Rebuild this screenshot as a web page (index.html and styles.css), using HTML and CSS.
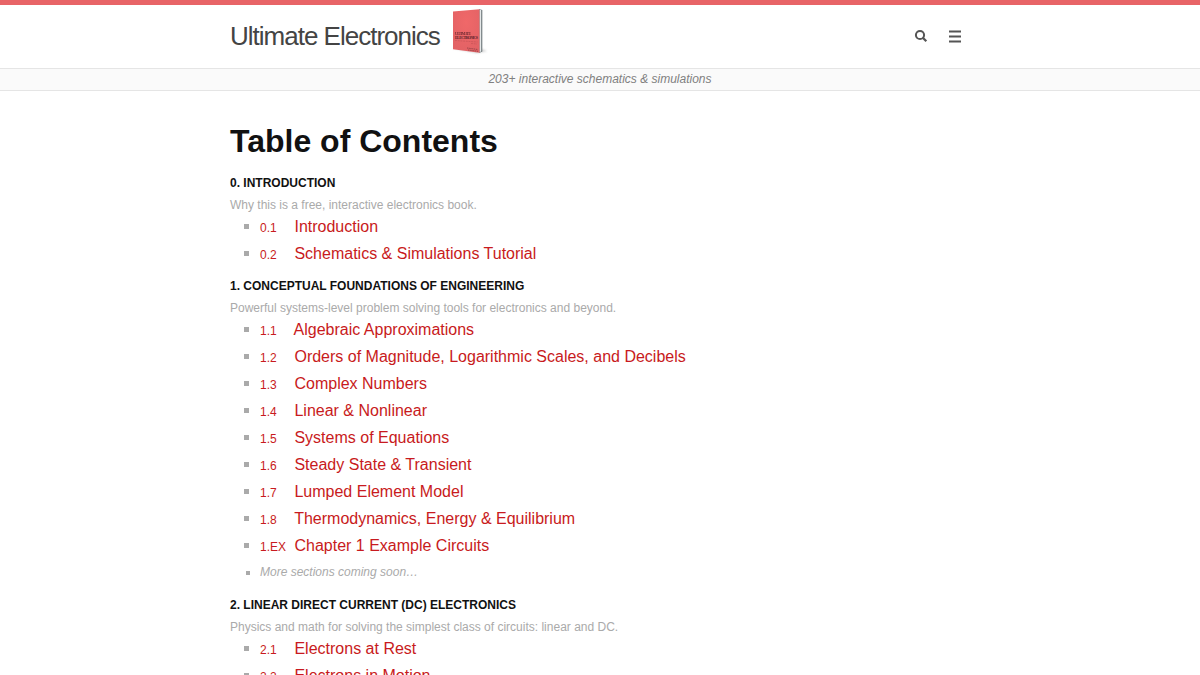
FILE: index.html
```html
<!DOCTYPE html>
<html lang="en">
<head>
<meta charset="utf-8">
<title>Ultimate Electronics</title>
<link rel="stylesheet" href="styles.css">
</head>
<body>
<header class="site-header">
  <div class="header-inner">
    <a class="brand">
      <span class="brand-name">Ultimate Electronics</span>
      <svg class="book" width="40" height="50" viewBox="0 0 40 50">
        <defs>
          <radialGradient id="cover" cx=".5" cy=".3" r=".7"><stop offset="0" stop-color="#f06869"/><stop offset="1" stop-color="#e26265"/></radialGradient>
          <filter id="soft" x="-30%" y="-100%" width="160%" height="300%"><feGaussianBlur stdDeviation=".8"/></filter>
        </defs>
        <path d="M2 43L27 48L37 46L31 44Z" fill="#777" opacity=".4" filter="url(#soft)"/>
        <path d="M29 4L32.300 5V46.600L29 48Z" fill="#697477"/>
        <path d="M29.500 4.600L31.200 5V46.200L29.500 47.500Z" fill="#e5e8e8"/>
        <path d="M3 6.600L29.500 4.200V47.800L3 44.200Z" fill="url(#cover)"/>
        <g font-family="Liberation Serif, serif" font-weight="bold" fill="#5a2028">
          <text x="5" y="29.900" font-size="3.700" textLength="16" opacity=".85">ULTIMATE</text>
          <text x="5" y="33.600" font-size="3.900" textLength="23">ELECTRONICS</text>
        </g>
        <path d="M5 35.500L27.500 37M21 38.500L27 39" stroke="#b94c51" stroke-width=".5" stroke-dasharray="2 .7"/>
        <path d="M17 43L28 44.500M18 45L28 46.300" stroke="#8b3d42" stroke-width=".8" stroke-dasharray="1.500 .7"/>
      </svg>
    </a>
    <nav class="tools">
      <svg width="14" height="14" viewBox="0 0 14 14" fill="none" stroke="#555" stroke-width="2"><circle cx="6" cy="6" r="4.100"/><path d="M8.800 8.800L12.300 12.300" stroke-width="2.300"/></svg>
      <svg width="12" height="14" viewBox="0 0 12 14" fill="#555"><path d="M0 1.500h12v2H0zM0 6.500h12v2H0zM0 11.500h12v2H0z"/></svg>
    </nav>
  </div>
</header>
<div class="tagline">203+ interactive schematics &amp; simulations</div>
<main class="content">
  <h1>Table of Contents</h1>
  <section class="chapter">
    <h2>0. Introduction</h2>
    <p>Why this is a free, interactive electronics book.</p>
    <ul>
      <li><a><span class="num">0.1</span> Introduction</a></li>
      <li><a><span class="num">0.2</span> Schematics &amp; Simulations Tutorial</a></li>
    </ul>
  </section>
  <section class="chapter">
    <h2>1. Conceptual Foundations of Engineering</h2>
    <p>Powerful systems-level problem solving tools for electronics and beyond.</p>
    <ul>
      <li><a><span class="num">1.1</span> Algebraic Approximations</a></li>
      <li><a><span class="num">1.2</span> Orders of Magnitude, Logarithmic Scales, and Decibels</a></li>
      <li><a><span class="num">1.3</span> Complex Numbers</a></li>
      <li><a><span class="num">1.4</span> Linear &amp; Nonlinear</a></li>
      <li><a><span class="num">1.5</span> Systems of Equations</a></li>
      <li><a><span class="num">1.6</span> Steady State &amp; Transient</a></li>
      <li><a><span class="num">1.7</span> Lumped Element Model</a></li>
      <li><a><span class="num">1.8</span> Thermodynamics, Energy &amp; Equilibrium</a></li>
      <li><a><span class="num">1.EX</span> Chapter 1 Example Circuits</a></li>
      <li class="soon">More sections coming soon…</li>
    </ul>
  </section>
  <section class="chapter">
    <h2>2. Linear Direct Current (DC) Electronics</h2>
    <p>Physics and math for solving the simplest class of circuits: linear and DC.</p>
    <ul>
      <li><a><span class="num">2.1</span> Electrons at Rest</a></li>
      <li><a><span class="num">2.2</span> Electrons in Motion</a></li>
    </ul>
  </section>
</main>
</body>
</html>
```
FILE: styles.css
```css
* { box-sizing: border-box; }
body {
  margin: 0;
  height: 675px;
  overflow: hidden;
  background: #fff;
  color: #111;
  font: 16px/27px "Liberation Sans", Arial, sans-serif;
}
.site-header { height: 68px; border-top: 5px solid #e86467; }
.header-inner, .content { width: 740px; margin: 0 auto; }
.header-inner { height: 63px; display: flex; justify-content: space-between; }
.brand { display: flex; }
.brand-name {
  color: #444;
  font-size: 26px;
  letter-spacing: -1px;
  line-height: 62px;
}
.book { margin-left: 10px; }
.tools {
  display: flex;
  align-items: center;
  gap: 21px;
  height: 62px;
  padding-right: 9px;
}
.tagline {
  height: 23px;
  border: solid #e5e5e5;
  border-width: 1px 0;
  background: #fafafa;
  color: #808080;
  font-size: 12px;
  font-style: italic;
  line-height: 21px;
  text-align: center;
}
.content { padding-top: 30px; }
h1 { margin: 0 0 11px; font-size: 32px; line-height: 40px; }
h2 {
  margin: 0;
  font-size: 12px;
  line-height: 22px;
  text-transform: uppercase;
}
.chapter { margin-bottom: 9px; }
.chapter p {
  height: 16px;
  margin: 2px 0 0;
  color: #aaa;
  font-size: 12px;
  line-height: 18px;
}
ul { margin: 0; padding-left: 30px; list-style: square; }
li { height: 27px; color: #aaa; }
li a { color: #c81a20; vertical-align: -1px; }
.num { display: inline-block; width: 30px; font-size: 12px; }
.soon { padding-top: 1px; font-size: 12px; font-style: italic; }
```
